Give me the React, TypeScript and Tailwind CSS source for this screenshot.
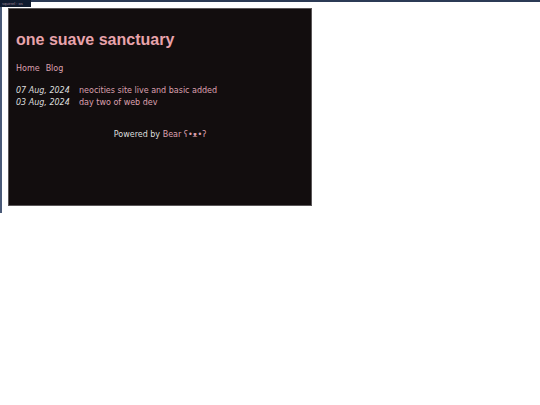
export default function App() {
  const posts = [
    { date: "07 Aug, 2024", title: "neocities site live and basic added" },
    { date: "03 Aug, 2024", title: "day two of web dev" },
  ];

  return (
    <div className="relative w-[540px] h-[405px] bg-white overflow-hidden">
      {/* top bar */}
      <div className="flex h-[7px] border-t-2 border-[#2b3a55]">
        <div className="w-[31px] h-[7px] -mt-[2px] bg-[#0f1a2e] text-[#a08595] text-[4px] leading-[7px] pl-[2px] font-['Liberation_Sans',sans-serif]">
          squirrel : os
        </div>
      </div>

      <div className="flex">
        <div className="w-[2px] h-[206px] bg-[#4a5a78]" />
        <div className="ml-[6px] mt-px w-[304px] h-[198px] bg-[#120d0e] border border-[#5a5658] px-[7px] font-['DejaVu_Sans',Verdana,sans-serif] text-[#dddddd]">
          <h1 className="mt-[21px] text-[16px] leading-[20px] font-bold text-[#e8a3ab] font-['Liberation_Sans',Arial,sans-serif]">
            one suave sanctuary
          </h1>

          <nav className="mt-[13px] flex gap-[6px] text-[8px] leading-[12px] text-[#dca0ae]">
            <span>Home</span>
            <span>Blog</span>
          </nav>

          <ul className="mt-[10px] text-[8px] leading-[12px]">
            {posts.map((p) => (
              <li key={p.date} className="flex">
                <span className="w-[63px] shrink-0 italic text-[#dddddd]">{p.date}</span>
                <span className="text-[#dca0ae]">{p.title}</span>
              </li>
            ))}
          </ul>

          <footer className="mt-[20px] text-center text-[8px] leading-[12px] text-[#dddddd]">
            Powered by <span className="text-[#dca0ae]">Bear ʕ•ᴥ•ʔ</span>
          </footer>
        </div>
      </div>
    </div>
  );
}
